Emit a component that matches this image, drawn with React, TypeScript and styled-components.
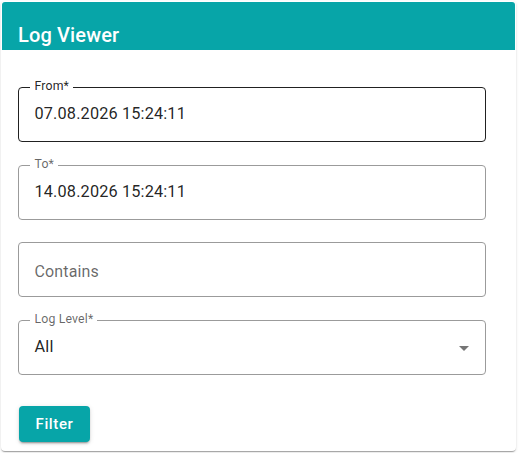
import React from "react";
import styled, { createGlobalStyle } from "styled-components";

const TEAL = "#07a5a8";

const Global = createGlobalStyle`
  html, body { margin: 0; padding: 0; background: #fff; }
  body { font-family: Roboto, "Noto Sans", "Liberation Sans", sans-serif; }
  * { box-sizing: border-box; }
`;

const Page = styled.div`
  padding: 1px 3px 2px 1px;
`;

const Card = styled.div`
  width: 515px;
  height: 450px;
  border-radius: 4px;
  background: #fff;
  box-shadow: 0 2px 1px -1px rgba(0,0,0,0.2), 0 1px 1px 0 rgba(0,0,0,0.14), 0 1px 3px 0 rgba(0,0,0,0.12);
  display: flex;
  flex-direction: column;
  overflow: hidden;
`;

const Header = styled.div`
  background: ${TEAL};
  height: 48px;
  margin: 1px 1px 0 1px;
  border-radius: 3px 3px 0 0;
  padding: 17px 16px 0 16px;
  color: #fff;
  font-size: 20px;
  font-weight: 500;
  line-height: 32px;
  letter-spacing: 0.15px;
`;

const Body = styled.div`
  padding: 37px 0 0 17px;
  display: flex;
  flex-direction: column;
  gap: 22.7px;
`;

const Field = styled.div`
  position: relative;
  width: 468px;
  height: 55px;
`;

const Outline = styled.fieldset<{ $focused?: boolean }>`
  position: absolute;
  inset: -5px 0 0 0;
  margin: 0;
  padding: 0 0 0 11px;
  border: 1px solid ${p => (p.$focused ? "rgba(0,0,0,0.87)" : "#9b9b9b")};
  border-radius: 4px;
  pointer-events: none;
  min-width: 0;
`;

const Legend = styled.legend<{ $show?: boolean }>`
  padding: 0;
  height: 11px;
  font-size: 12.3px;
  line-height: 11px;
  letter-spacing: 0.15px;
  visibility: hidden;
  max-width: ${p => (p.$show ? "100%" : "0.01px")};
  white-space: nowrap;
  & > span { padding: 0 4px 0 4.5px; display: inline-block; }
`;

const FloatLabel = styled.label<{ $focused?: boolean }>`
  position: absolute;
  left: 16.5px;
  top: -8px;
  font-size: 12.3px;
  line-height: 15px;
  letter-spacing: 0.15px;
  color: ${p => (p.$focused ? "rgba(0,0,0,0.87)" : "rgba(0,0,0,0.6)")};
  white-space: nowrap;
`;

const Value = styled.div`
  padding: 15px 14px 0 16.5px;
  font-size: 16.3px;
  line-height: 23px;
  letter-spacing: 0.15px;
  color: rgba(0,0,0,0.87);
`;

const Placeholder = styled(Value)`
  padding-top: 18px;
  font-size: 16px;
  color: rgba(0,0,0,0.6);
`;

const Arrow = styled.svg`
  position: absolute;
  right: 10px;
  top: 16px;
  width: 24px;
  height: 24px;
  fill: rgba(0,0,0,0.54);
`;

const Button = styled.button`
  margin-top: 8.3px;
  align-self: flex-start;
  margin-left: 1px;
  width: 71px;
  height: 36px;
  padding: 0;
  border: none;
  border-radius: 4px;
  background: ${TEAL};
  color: #fff;
  font-family: inherit;
  font-size: 15px;
  font-weight: 500;
  letter-spacing: 0.6px;
  line-height: 36px;
  text-align: center;
  box-shadow: 0 3px 1px -2px rgba(0,0,0,0.2), 0 2px 2px 0 rgba(0,0,0,0.14), 0 1px 5px 0 rgba(0,0,0,0.12);
`;

type TF = { label?: string; value?: string; placeholder?: string; focused?: boolean; select?: boolean };

function TextField({ label, value, placeholder, focused, select }: TF) {
  return (
    <Field>
      {label && <FloatLabel $focused={focused}>{label}</FloatLabel>}
      {value !== undefined ? <Value>{value}</Value> : <Placeholder>{placeholder}</Placeholder>}
      {select && (
        <Arrow viewBox="0 0 24 24">
          <path d="M7 10l5 5 5-5z" />
        </Arrow>
      )}
      <Outline $focused={focused}>
        <Legend $show={!!label}>
          <span>{label ?? ""}</span>
        </Legend>
      </Outline>
    </Field>
  );
}

export default function App() {
  return (
    <>
      <Global />
      <Page>
        <Card>
          <Header>Log Viewer</Header>
          <Body>
            <TextField label="From*" value="07.08.2026 15:24:11" focused />
            <TextField label="To*" value="14.08.2026 15:24:11" />
            <TextField placeholder="Contains" />
            <TextField label="Log Level*" value="All" select />
            <Button>Filter</Button>
          </Body>
        </Card>
      </Page>
    </>
  );
}
